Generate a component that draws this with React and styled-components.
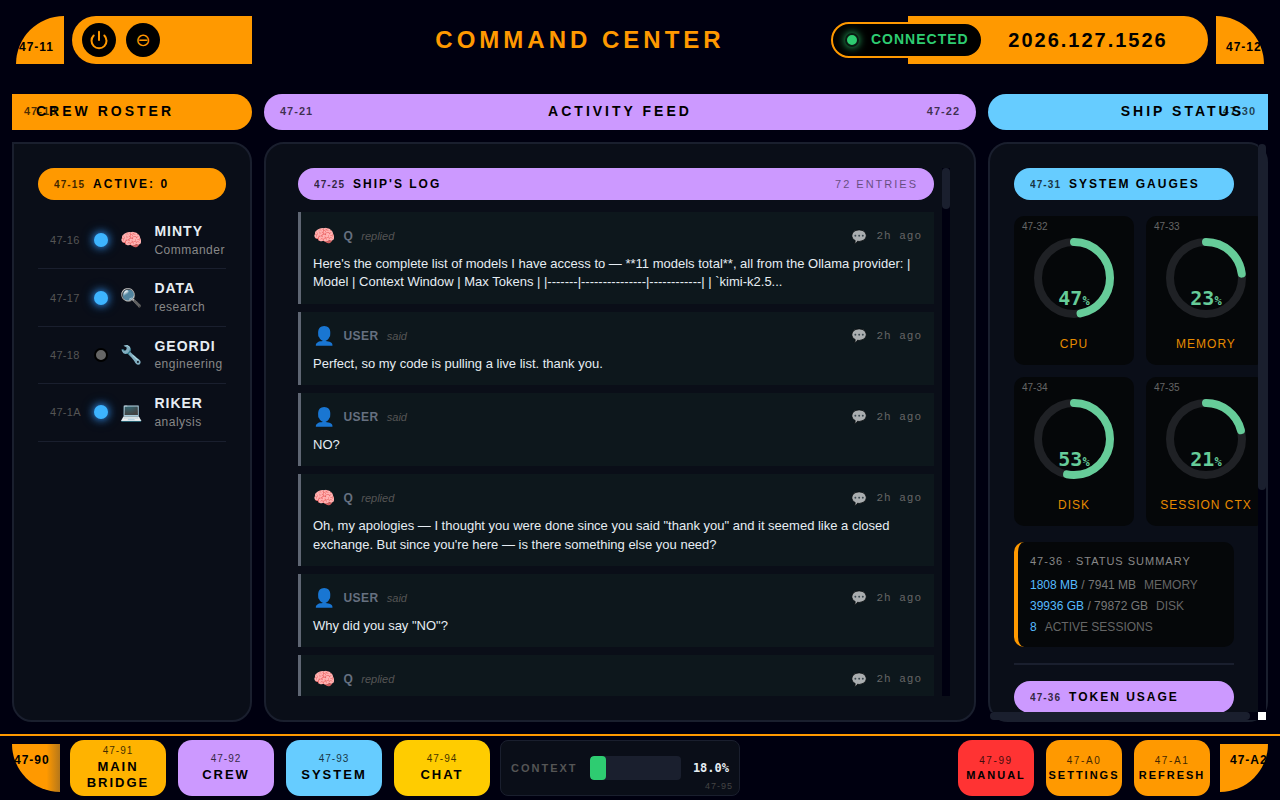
import React from 'react';
import styled, { createGlobalStyle } from 'styled-components';
import { Power } from 'lucide-react';

const Global = createGlobalStyle`
  html, body { margin: 0; padding: 0; background: #000010; overflow: hidden; }
  * { box-sizing: border-box; }
  body { font-family: "Liberation Sans", Arial, "Noto Color Emoji", sans-serif; }
`;

const orange = '#ff9900';
const purple = '#cc99ff';
const blue = '#66ccff';
const barBase = '#1a1f2e';

const Screen = styled.div`
  width: 1280px;
  height: 800px;
  display: flex;
  flex-direction: column;
  background: #000010;
  overflow: hidden;
`;

const Header = styled.header`
  display: flex;
  align-items: stretch;
  height: 48px;
  margin: 16px 16px 0;
`;

const Elbow = styled.div`
  width: 48px;
  height: 48px;
  flex: none;
  background: ${orange};
  color: #000;
  font-size: 12px;
  font-weight: 700;
  letter-spacing: 1px;
  white-space: nowrap;
  display: flex;
  align-items: flex-end;
  padding: 0 0 10px ${p => (p.$right ? '10px' : '3px')};
  border-top-left-radius: ${p => (p.$right ? '0' : '48px')};
  border-top-right-radius: ${p => (p.$right ? '48px' : '0')};
`;

const ControlPill = styled.div`
  width: 180px;
  margin-left: 8px;
  background: ${orange};
  border-radius: 24px 0 0 24px;
  display: flex;
  align-items: center;
  gap: 10px;
  padding-left: 10px;
`;

const RoundButton = styled.button`
  width: 34px;
  height: 34px;
  padding: 0;
  border: 0;
  border-radius: 50%;
  background: #000;
  color: ${orange};
  font-family: "DejaVu Sans", sans-serif;
  font-size: 18px;
  line-height: 1;
  display: flex;
  align-items: center;
  justify-content: center;
`;

const Title = styled.h1`
  flex: 1;
  margin: 0;
  align-self: center;
  text-align: center;
  color: ${orange};
  font-size: 24px;
  font-weight: 700;
  letter-spacing: 4px;
`;

const DatePill = styled.div`
  position: relative;
  width: 300px;
  background: ${orange};
  border-radius: 0 24px 24px 0;
  display: flex;
  align-items: center;
  justify-content: center;
  padding-left: 60px;
  color: #000;
  font-size: 20px;
  font-weight: 700;
  letter-spacing: 2px;
  margin-right: 8px;
`;

const Status = styled.div`
  position: absolute;
  left: -77px;
  top: 6px;
  width: 152px;
  height: 36px;
  display: flex;
  align-items: center;
  gap: 12px;
  padding: 0 0 2px 12px;
  background: #000;
  border: 2px solid ${orange};
  border-radius: 18px;
  color: #2ecc71;
  font-size: 14px;
  font-weight: 700;
  letter-spacing: 1px;
`;

const StatusDot = styled.span`
  width: 14px;
  height: 14px;
  margin-top: 2px;
  border-radius: 50%;
  background: #2ecc71;
  border: 2px solid #0a1a12;
  box-shadow: 0 0 8px #2ecc71;
`;

const Board = styled.main`
  display: grid;
  grid-template-columns: 240px minmax(0, 1fr) 280px;
  grid-template-rows: 36px 580px;
  gap: 12px;
  margin: 30px 12px 0;
`;

const SectionBar = styled.div`
  position: relative;
  display: flex;
  align-items: center;
  justify-content: ${p => p.$align || 'center'};
  background: ${p => p.$color};
  color: #000;
  font-size: 14px;
  font-weight: 700;
  letter-spacing: 3px;
  border-radius: ${p => p.$radius};
  padding: ${p => p.$pad || '0 16px 2px'};
`;

const BarId = styled.span`
  position: absolute;
  top: 17px;
  transform: translateY(-50%);
  ${p => (p.$right !== undefined ? `right: ${p.$right}px;` : `left: ${p.$left}px;`)}
  font-size: 11px;
  font-weight: 700;
  letter-spacing: 1px;
  color: rgba(0, 0, 0, 0.7);
`;

const Panel = styled.section`
  min-width: 0;
  height: 100%;
  background: #0a0e18;
  border: 2px solid ${barBase};
  border-radius: ${p => p.$radius || '20px'};
  padding: ${p => p.$pad || '24px'};
  overflow: hidden;
`;

const ScrollHost = styled.div`
  position: relative;
  min-width: 0;
  min-height: 0;
`;

const TrackY = styled.div`
  position: absolute;
  top: ${p => p.$inset}px;
  right: ${p => p.$inset}px;
  bottom: ${p => p.$inset + p.$corner}px;
  width: 8px;
  background: #000010;
`;

const TrackX = styled.div`
  position: absolute;
  left: 2px;
  right: 10px;
  bottom: 2px;
  height: 8px;
  background: #000010;
`;

const Thumb = styled.div`
  background: ${barBase};
  border-radius: 4px;
  width: ${p => p.$w};
  height: ${p => p.$h};
`;

const ScrollCorner = styled.div`
  position: absolute;
  right: 2px;
  bottom: 2px;
  width: 8px;
  height: 8px;
  background: #fff;
`;

const Pill = styled.div`
  height: 32px;
  flex: none;
  display: flex;
  align-items: center;
  gap: 8px;
  padding: 0 16px;
  border-radius: 16px;
  background: ${p => p.$color};
  color: #000;
  font-size: 12px;
  font-weight: 700;
  letter-spacing: 2px;
`;

const PillId = styled.span`
  font-size: 10px;
  letter-spacing: 1.1px;
  opacity: 0.75;
`;

const PillNote = styled.span`
  margin-left: auto;
  font-size: 11px;
  font-weight: 400;
  letter-spacing: 2px;
  opacity: 0.5;
`;

const CrewList = styled.ul`
  list-style: none;
  margin: 12px 0 0;
  padding: 0;
`;

const CrewRow = styled.li`
  display: flex;
  align-items: center;
  gap: 12px;
  padding: 10px 0 10px 12px;
  border-bottom: 1px solid ${barBase};
`;

const CrewId = styled.span`
  width: 32px;
  flex: none;
  font-size: 11px;
  letter-spacing: 0.3px;
  color: #555;
`;

const CrewDot = styled.span`
  width: 14px;
  height: 14px;
  flex: none;
  border-radius: 50%;
  background: ${p => (p.$on ? '#3db4ff' : '#666')};
  border: ${p => (p.$on ? '0' : '2px solid #000')};
  box-shadow: ${p => (p.$on ? '0 0 8px #3399ff, 0 0 14px rgba(51,153,255,.35)' : 'none')};
`;

const Emoji = styled.span`
  flex: none;
  font-family: "Noto Color Emoji", sans-serif;
  font-size: ${p => p.$size || 18}px;
  line-height: 1;
  opacity: ${p => p.$dim || 1};
`;

const CrewText = styled.div`
  min-width: 0;
  line-height: 1.4;
`;

const CrewName = styled.div`
  font-size: 14px;
  font-weight: 700;
  letter-spacing: 1px;
  color: #e6edf3;
`;

const CrewRole = styled.div`
  font-size: 12px;
  letter-spacing: 0.5px;
  color: #888;
  white-space: nowrap;
`;

const LogFrame = styled.div`
  position: relative;
  height: 528px;
`;

const LogList = styled.div`
  height: 100%;
  margin-right: 8px;
  overflow: hidden;
  padding: 0 8px;
  display: flex;
  flex-direction: column;
  gap: 8px;
`;

const LogPill = styled(Pill)`
  margin-bottom: 4px;
`;

const Entry = styled.article`
  flex: none;
  background: #0d171c;
  border-left: 3px solid #5f6673;
  padding: 12px 12px 12.2px 12px;
`;

const EntryHead = styled.div`
  display: flex;
  align-items: center;
  height: 24px;
  margin-bottom: 7px;
`;

const Actor = styled.span`
  margin-left: 8px;
  font-size: 12px;
  font-weight: 700;
  letter-spacing: 0.5px;
  color: #667080;
`;

const Verb = styled.span`
  margin-left: 8px;
  font-size: 11px;
  font-style: italic;
  color: #555;
`;

const Time = styled.span`
  margin-left: auto;
  display: flex;
  align-items: center;
  gap: 8px;
  font-family: "Liberation Mono", monospace;
  font-size: 11px;
  letter-spacing: 1px;
  color: #666;
`;

const EntryText = styled.p`
  margin: 0;
  font-size: 13px;
  line-height: 1.4;
  color: #e6edf3;
`;

const StatusInner = styled.div`
  width: 220px;
`;

const GaugeGrid = styled.div`
  display: grid;
  grid-template-columns: 120px 120px;
  gap: 12px;
  margin-top: 16px;
`;

const GaugeCard = styled.div`
  position: relative;
  height: 149px;
  background: #050709;
  border-radius: 10px;
  display: flex;
  flex-direction: column;
  align-items: center;
  padding-top: 22px;
`;

const GaugeId = styled.span`
  position: absolute;
  left: 8px;
  top: 5px;
  font-size: 10px;
  color: #666;
`;

const Ring = styled.div`
  position: relative;
  width: 80px;
  height: 80px;
`;

const RingValue = styled.div`
  position: absolute;
  left: 0;
  right: 0;
  top: 48px;
  text-align: center;
  font-family: "DejaVu Sans Mono", monospace;
  font-weight: 700;
  font-size: 20px;
  line-height: 24px;
  color: #66cc99;
  small { font-size: 12px; }
`;

const GaugeLabel = styled.div`
  margin-top: 19px;
  font-size: 12px;
  letter-spacing: 1px;
  color: #e58a00;
`;

const Summary = styled.div`
  margin-top: 16px;
  height: 105px;
  padding: 13px 12px;
  background: #050709;
  border-left: 4px solid ${orange};
  border-radius: 10px;
  font-size: 12px;
  color: #777;
`;

const SummaryTitle = styled.div`
  font-size: 11px;
  letter-spacing: 1px;
  color: #888;
  margin-bottom: 8px;
`;

const SummaryRow = styled.div`
  line-height: 21px;
  b { font-weight: 400; color: #55bbff; }
  i { font-style: normal; color: #666; margin-left: 8px; }
`;

const Divider = styled.hr`
  height: 2px;
  margin: 16px 0;
  border: 0;
  background: ${barBase};
`;

const Footer = styled.footer`
  margin-top: 12px;
  height: 66px;
  border-top: 2px solid ${orange};
  padding: 4px 12px;
  display: flex;
  align-items: center;
  gap: 10px;
`;

const FootElbow = styled.div`
  width: 48px;
  height: 48px;
  flex: none;
  align-self: center;
  background: ${p => (p.$right ? orange : `linear-gradient(to right, ${orange} 72%, #b5771a)`)};
  border-bottom-left-radius: ${p => (p.$right ? '0' : '48px')};
  border-bottom-right-radius: ${p => (p.$right ? '48px' : '0')};
  color: #000;
  font-size: 12px;
  font-weight: 700;
  letter-spacing: 1px;
  white-space: nowrap;
  padding: 9px 0 0 ${p => (p.$right ? '10px' : '2px')};
`;

const NavGroup = styled.nav`
  display: flex;
  gap: 12px;
`;

const NavButton = styled.button`
  width: ${p => (p.$small ? 76 : 96)}px;
  height: 56px;
  padding: ${p => (p.$small ? '2px 0 0' : '0')};
  border: 0;
  border-radius: 14px;
  background: ${p => p.$color};
  color: #000;
  font-family: inherit;
  font-size: ${p => (p.$small ? 11 : 13)}px;
  font-weight: 700;
  letter-spacing: 2px;
  line-height: 1.25;
  display: flex;
  flex-direction: column;
  align-items: center;
  justify-content: center;
  white-space: nowrap;
`;

const NavId = styled.span`
  font-size: 10px;
  font-weight: 400;
  letter-spacing: ${p => (p.$small ? 1.6 : 1)}px;
  opacity: 0.75;
  margin-bottom: 2px;
  line-height: 1.2;
`;

const ContextBox = styled.div`
  position: relative;
  width: 240px;
  height: 56px;
  background: #0a0e18;
  border: 1px solid ${barBase};
  border-radius: 8px;
  display: flex;
  align-items: center;
  padding: 0 10px;
`;

const ContextLabel = styled.span`
  width: 79px;
  font-size: 11px;
  font-weight: 700;
  letter-spacing: 2px;
  color: #555;
`;

const ContextBar = styled.div`
  width: 91px;
  height: 24px;
  background: ${barBase};
  border-radius: 4px;
  overflow: hidden;
`;

const ContextFill = styled.div`
  height: 100%;
  background: #2ecc71;
  border-radius: 4px;
`;

const ContextValue = styled.span`
  margin-left: 12px;
  font-family: "DejaVu Sans Mono", monospace;
  font-size: 12px;
  font-weight: 700;
  color: #e6edf3;
`;

const ContextId = styled.span`
  position: absolute;
  right: 6px;
  bottom: 4px;
  font-size: 9px;
  letter-spacing: 1px;
  color: #444;
`;

const Spacer = styled.div`
  flex: 1;
`;

const crew = [
  ['47-16', true, '🧠', 'MINTY', 'Commander'],
  ['47-17', true, '🔍', 'DATA', 'research'],
  ['47-18', false, '🔧', 'GEORDI', 'engineering'],
  ['47-1A', true, '💻', 'RIKER', 'analysis'],
];

const Q = ['🧠', 'Q', 'replied'];
const U = ['👤', 'USER', 'said'];
const entries = [
  [Q, "Here's the complete list of models I have access to — **11 models total**, all from the Ollama provider: | Model | Context Window | Max Tokens | |-------|---------------|------------| | `kimi-k2.5..."],
  [U, 'Perfect, so my code is pulling a live list. thank you.'],
  [U, 'NO?'],
  [Q, "Oh, my apologies — I thought you were done since you said \"thank you\" and it seemed like a closed exchange. But since you're here — is there something else you need?"],
  [U, 'Why did you say "NO"?'],
  [Q, null],
];

const gauges = [
  ['47-32', 47, 'CPU'],
  ['47-33', 23, 'MEMORY'],
  ['47-34', 53, 'DISK'],
  ['47-35', 21, 'SESSION CTX'],
];

const Gauge = ({ id, value, label }) => {
  const r = 36;
  const c = 2 * Math.PI * r;
  return (
    <GaugeCard>
      <GaugeId>{id}</GaugeId>
      <Ring>
        <svg width="80" height="80" viewBox="0 0 80 80">
          <circle cx="40" cy="40" r={r} fill="none" stroke="#1f2125" strokeWidth="8" />
          <circle
            cx="40" cy="40" r={r} fill="none" stroke="#66cc99" strokeWidth="8" strokeLinecap="round"
            strokeDasharray={`${(c * value) / 100} ${c}`} transform="rotate(-90 40 40)"
          />
        </svg>
        <RingValue>{value}<small>%</small></RingValue>
      </Ring>
      <GaugeLabel>{label}</GaugeLabel>
    </GaugeCard>
  );
};

const NavBtn = ({ id, color, small, children }) => (
  <NavButton $color={color} $small={small}>
    <NavId $small={small}>{id}</NavId>
    {children}
  </NavButton>
);

export default function App() {
  return (
    <Screen>
      <Global />
      <Header>
        <Elbow>47-11</Elbow>
        <ControlPill>
          <RoundButton aria-label="Power"><Power size={20} strokeWidth={2.4} /></RoundButton>
          <RoundButton aria-label="Minimize">⊖</RoundButton>
        </ControlPill>
        <Title>COMMAND CENTER</Title>
        <DatePill>
          <Status><StatusDot />CONNECTED</Status>
          2026.127.1526
        </DatePill>
        <Elbow $right>47-12</Elbow>
      </Header>

      <Board>
        <SectionBar $color={orange} $radius="0 18px 18px 0" $align="flex-start" $pad="0 0 2px 24px">
          <BarId $left={12}>47-13</BarId>
          CREW ROSTER
        </SectionBar>
        <SectionBar $color={purple} $radius="18px">
          <BarId $left={16}>47-21</BarId>
          ACTIVITY FEED
          <BarId $right={16}>47-22</BarId>
        </SectionBar>
        <SectionBar $color={blue} $radius="18px 0 0 18px" $align="flex-end" $pad="0 24px 2px 0">
          SHIP STATUS
          <BarId $right={12}>47-30</BarId>
        </SectionBar>

        <Panel $radius="0 20px 20px 20px">
          <Pill $color={orange}><PillId>47-15</PillId>ACTIVE: 0</Pill>
          <CrewList>
            {crew.map(([id, on, icon, name, role]) => (
              <CrewRow key={id}>
                <CrewId>{id}</CrewId>
                <CrewDot $on={on} />
                <Emoji>{icon}</Emoji>
                <CrewText>
                  <CrewName>{name}</CrewName>
                  <CrewRole>{role}</CrewRole>
                </CrewText>
              </CrewRow>
            ))}
          </CrewList>
        </Panel>

        <Panel>
          <LogFrame>
            <LogList>
              <LogPill $color={purple}>
                <PillId>47-25</PillId>SHIP'S LOG<PillNote>72 ENTRIES</PillNote>
              </LogPill>
              {entries.map(([[icon, who, verb], text], i) => (
                <Entry key={i}>
                  <EntryHead>
                    <Emoji>{icon}</Emoji>
                    <Actor>{who}</Actor>
                    <Verb>{verb}</Verb>
                    <Time><Emoji $size={13} $dim={0.65}>💬</Emoji>2h ago</Time>
                  </EntryHead>
                  {text && <EntryText>{text}</EntryText>}
                </Entry>
              ))}
            </LogList>
            <TrackY $inset={0} $corner={0}><Thumb $w="8px" $h="41px" /></TrackY>
          </LogFrame>
        </Panel>

        <ScrollHost>
          <Panel $pad="24px 0 24px 24px">
            <StatusInner>
              <Pill $color={blue}><PillId>47-31</PillId>SYSTEM GAUGES</Pill>
              <GaugeGrid>
                {gauges.map(([id, v, l]) => <Gauge key={id} id={id} value={v} label={l} />)}
              </GaugeGrid>
              <Summary>
                <SummaryTitle>47-36 · STATUS SUMMARY</SummaryTitle>
                <SummaryRow><b>1808 MB</b> / 7941 MB<i>MEMORY</i></SummaryRow>
                <SummaryRow><b>39936 GB</b> / 79872 GB<i>DISK</i></SummaryRow>
                <SummaryRow><b>8</b><i>ACTIVE SESSIONS</i></SummaryRow>
              </Summary>
              <Divider />
              <Pill $color={purple}><PillId>47-36</PillId>TOKEN USAGE</Pill>
            </StatusInner>
          </Panel>
          <TrackY $inset={2} $corner={8}><Thumb $w="8px" $h="346px" /></TrackY>
          <TrackX><Thumb $w="260px" $h="8px" /></TrackX>
          <ScrollCorner />
        </ScrollHost>
      </Board>

      <Footer>
        <FootElbow>47-90</FootElbow>
        <NavGroup>
          <NavBtn id="47-91" color="#ffb300">MAIN<br />BRIDGE</NavBtn>
          <NavBtn id="47-92" color={purple}>CREW</NavBtn>
          <NavBtn id="47-93" color={blue}>SYSTEM</NavBtn>
          <NavBtn id="47-94" color="#ffcc00">CHAT</NavBtn>
        </NavGroup>
        <ContextBox>
          <ContextLabel>CONTEXT</ContextLabel>
          <ContextBar><ContextFill style={{ width: '18%' }} /></ContextBar>
          <ContextValue>18.0%</ContextValue>
          <ContextId>47-95</ContextId>
        </ContextBox>
        <Spacer />
        <NavGroup>
          <NavBtn id="47-99" color="#ff3333" small>MANUAL</NavBtn>
          <NavBtn id="47-A0" color={orange} small>SETTINGS</NavBtn>
          <NavBtn id="47-A1" color={orange} small>REFRESH</NavBtn>
        </NavGroup>
        <FootElbow $right>47-A2</FootElbow>
      </Footer>
    </Screen>
  );
}
